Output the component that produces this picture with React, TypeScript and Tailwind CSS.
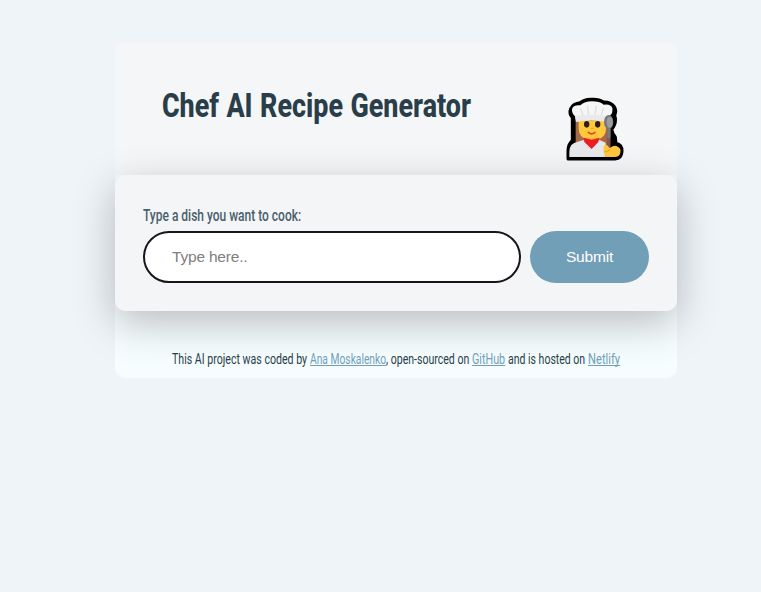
import { useLayoutEffect, useRef, useState, type ReactNode } from "react";

/* Squeezes a run of text horizontally so that it fills the width of its box. */
function Condensed({
  className,
  textClassName = "",
  children,
}: {
  className: string;
  textClassName?: string;
  children: ReactNode;
}) {
  const box = useRef<HTMLSpanElement>(null);
  const text = useRef<HTMLSpanElement>(null);
  const [scale, setScale] = useState(1);
  useLayoutEffect(() => {
    if (box.current && text.current) {
      setScale(box.current.offsetWidth / text.current.offsetWidth);
    }
  }, []);
  return (
    <span ref={box} className={`block shrink-0 whitespace-nowrap ${className}`}>
      <span
        ref={text}
        className={`inline-block origin-left ${textClassName}`}
        style={{ transform: `scaleX(${scale})` }}
      >
        {children}
      </span>
    </span>
  );
}

const link = "text-[#709fb7] underline decoration-1 underline-offset-[1px] [text-decoration-skip-ink:none]";

function ChefIcon() {
  return (
    <svg viewBox="0 0 240 240" className="size-20 shrink-0" aria-label="Chef">
      <path
        d="M40 212 V188 Q40 168 53 158 V89 Q42 76 48 62 Q55 47 76 45 Q89 34 111 35 Q132 34 145 43 Q166 42 176 55 Q185 68 178 82 Q183 97 178 109 Q175 118 169 123 Q172 139 180 147 Q182 158 181 167 Q201 170 200 190 Q199 211 180 212 Z"
        fill="#000"
        stroke="#000"
        strokeWidth="11"
        strokeLinejoin="round"
      />
      <path d="M62 95 H158 V172 H62Z" fill="#a56a4b" />
      <path d="M43 207 V191 Q43 165 69 161 L88 155 H132 L152 164 V207Z" fill="#e9e9ec" />
      <path d="M71 98 H153 V121 Q153 153 122 155 H99 Q72 151 71 121Z" fill="#ffc83d" />
      <path d="M92 149 H128 L131 160 L111 171 L89 160Z" fill="#f5b52e" />
      <path d="M86 149 L110 155 L134 149 L130 162 L110 183 L88 162Z" fill="#ed1c24" />
      <path
        d="M63 101 L60 85 Q50 76 51 64 Q54 50 76 52 Q89 40 111 40 Q134 40 146 50 Q168 47 172 60 Q175 76 163 84 L159 101 Q110 92 63 101Z"
        fill="#f6f6f6"
      />
      <path d="M63 101 L61 84 Q110 76 162 84 L159 101 Q110 92 63 101Z" fill="#eaeaec" />
      <path
        d="M77 61 L84 82 M97 53 L101 80 M124 53 L120 80 M146 60 L138 81"
        stroke="#dfdfe1"
        strokeWidth="4"
      />
      <ellipse cx="95" cy="109" rx="8" ry="10" fill="#321c14" />
      <ellipse cx="128" cy="109" rx="8" ry="10" fill="#321c14" />
      <path d="M106 120 Q111 124 117 120" fill="none" stroke="#edaa2d" strokeWidth="3" />
      <path d="M100 133 Q110 142 120 133" fill="none" stroke="#d64a25" strokeWidth="5" strokeLinecap="round" />
      <path d="M156 118 H167 L166 207 H154Z" fill="#8c5543" />
      <path d="M157 118 H166 V151 H157Z" fill="#767b80" />
      <ellipse cx="161" cy="102" rx="14" ry="21" fill="#74797e" />
      <ellipse cx="164" cy="103" rx="9" ry="17" fill="#9a9da1" />
      <path
        d="M146 185 Q143 171 155 170 L164 180 Q180 169 188 176 Q199 181 196 194 Q193 207 179 207 H154 Q145 201 146 185Z"
        fill="#ffc83d"
      />
      <path d="M148 191 Q159 192 165 184" fill="none" stroke="#eea92b" strokeWidth="4" />
    </svg>
  );
}

export default function App() {
  return (
    <div className="min-h-screen bg-[#eff4f9] pl-[115px] pt-[43px] font-['Roboto',sans-serif]">
      <main className="w-[562px] overflow-visible rounded-[10px] bg-[#f6fdff]">
        <header className="flex h-[132px] justify-between rounded-t-[10px] bg-[#f5f6f8] pl-[47px] pr-[42px] pt-[45px]">
          <h1 className="text-[34px] leading-[34px] font-extrabold text-[#293e49]">
            <Condensed className="w-[309px]" textClassName="[word-spacing:1px]">
              Chef AI Recipe Generator
            </Condensed>
          </h1>
          <ChefIcon />
        </header>
        <form
          className="relative h-[136px] rounded-[10px] bg-[#f4f5f7] px-7 pt-[29px] shadow-[0_12px_40px_rgba(0,0,0,0.25)]"
          onSubmit={(e) => e.preventDefault()}
        >
          <label
            htmlFor="dish"
            className="block h-[27px] text-[17px] leading-[22px] font-medium text-[#48606b]"
          >
            <Condensed className="w-[158px]">Type a dish you want to cook:</Condensed>
          </label>
          <div className="flex gap-[9px]">
            <input
              id="dish"
              placeholder="Type here.."
              className="h-[52px] w-[378px] rounded-full border-2 border-[#17151b] bg-white px-[27px] font-['Liberation_Sans',sans-serif] text-[15.5px] tracking-[-0.2px] placeholder:text-[#808080] outline-none"
            />
            <button className="h-[52px] w-[119px] rounded-full bg-[#709fb7] font-['Liberation_Sans',sans-serif] text-[15.5px] tracking-[-0.2px] text-white">
              Submit
            </button>
          </div>
        </form>
        <footer className="flex h-[67px] justify-center pt-[38px] text-[15px] leading-[20px] text-[#293e49]">
          <div className="flex w-[448px] justify-between">
            <Condensed className="w-[135px]">This AI project was coded by</Condensed>
            <Condensed className="w-[76px]" textClassName={link}>
              Ana Moskalenko
            </Condensed>
            <Condensed className="-ml-[3px] w-[83px]">, open-sourced on</Condensed>
            <Condensed className="w-[33px]" textClassName={link}>
              GitHub
            </Condensed>
            <Condensed className="w-[77px]">and is hosted on</Condensed>
            <Condensed className="w-[32px]" textClassName={link}>
              Netlify
            </Condensed>
          </div>
        </footer>
      </main>
    </div>
  );
}
